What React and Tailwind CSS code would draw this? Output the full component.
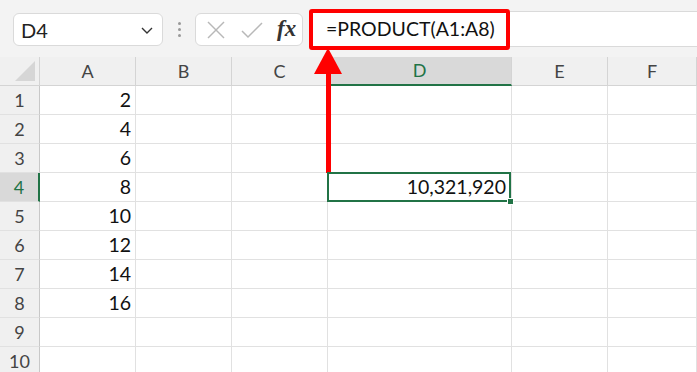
import React from 'react';

const cols = ['A', 'B', 'C', 'D', 'E', 'F'];
const values = { 1: '2', 2: '4', 3: '6', 4: '8', 5: '10', 6: '12', 7: '14', 8: '16' };
const rows = [1, 2, 3, 4, 5, 6, 7, 8, 9, 10];

function Corner() {
  return (
    <div className="relative h-[29px] border-b border-r border-[#d4d4d4] bg-[#f0f0f0]">
      <svg className="absolute right-[4px] bottom-[4px]" width="20" height="20" viewBox="0 0 20 20">
        <polygon points="20,0 20,20 0,20" fill="#d6d6d6" />
      </svg>
    </div>
  );
}

function ColHeader({ label }) {
  const active = label === 'D';
  return (
    <div
      className={
        'flex h-[29px] items-center justify-center border-r text-[18px] ' +
        (active
          ? 'border-b-2 border-r-[#d4d4d4] border-b-[#217346] bg-[#d9d9d9] text-[#217346]'
          : 'border-b border-[#d4d4d4] bg-[#f0f0f0] text-[#444]')
      }
    >
      {label}
    </div>
  );
}

function RowHeader({ n }) {
  const active = n === 4;
  return (
    <div
      className={
        'flex h-[29px] items-center justify-center border-b text-[18px] ' +
        (active
          ? 'border-r-2 border-b-[#e1e1e1] border-r-[#217346] bg-[#d9d9d9] text-[#217346]'
          : 'border-r border-b-[#e1e1e1] border-r-[#c8c8c8] bg-[#f0f0f0] text-[#444]')
      }
    >
      {n}
    </div>
  );
}

export default function App() {
  return (
    <div className="relative h-[372px] w-[697px] overflow-hidden bg-white" style={{ fontFamily: 'Lato, "Open Sans", sans-serif' }}>
      {/* formula bar */}
      <div className="flex h-[57px] items-start bg-[#f3f3f3] pt-[13px]">
        <div className="ml-[13px] flex h-[33px] w-[150px] items-center justify-between rounded-md border border-[#dadada] bg-white pl-[7px] pr-[8px] text-[20px] text-[#222]">
          <span>D4</span>
          <svg width="14" height="14" viewBox="0 0 14 14" fill="none" stroke="#333" strokeWidth="1.4">
            <polyline points="2,5 7,10 12,5" />
          </svg>
        </div>
        <div className="flex h-[33px] w-[32px] flex-col items-center justify-center gap-[3px]">
          <span className="h-[3px] w-[3px] rounded-full bg-[#999]" />
          <span className="h-[3px] w-[3px] rounded-full bg-[#999]" />
          <span className="h-[3px] w-[3px] rounded-full bg-[#999]" />
        </div>
        <div className="flex h-[33px] w-[108px] items-center rounded-md border border-[#dadada] bg-white">
          <svg className="ml-[9px]" width="22" height="22" viewBox="0 0 22 22" fill="none" stroke="#b8b8b8" strokeWidth="1.5">
            <line x1="3" y1="3" x2="19" y2="19" />
            <line x1="19" y1="3" x2="3" y2="19" />
          </svg>
          <svg className="ml-[13px]" width="24" height="22" viewBox="0 0 24 22" fill="none" stroke="#b8b8b8" strokeWidth="1.5">
            <polyline points="2,12 8,18 22,4" />
          </svg>
          <span className="ml-[13px] text-[23px] font-bold italic text-[#333]" style={{ fontFamily: '"Liberation Serif", serif' }}>
            fx
          </span>
        </div>
        <div className="ml-[7px] mt-[-2px] flex h-[36px] flex-1 items-center border-y border-[#dadada] bg-white">
          <div className="-ml-[1px] flex h-[41px] w-[201px] items-center rounded-[3px] border-[4px] border-[#ff0000] pl-[13px] text-[19.5px] text-[#111]">
            =PRODUCT(A1:A8)
          </div>
        </div>
      </div>

      {/* grid */}
      <div className="grid grid-cols-[40px_96px_96px_96px_184px_96px_1fr]">
        <Corner />
        {cols.map((c) => (
          <ColHeader key={c} label={c} />
        ))}
        {rows.map((r) => (
          <React.Fragment key={r}>
            <RowHeader n={r} />
            {cols.map((c) => (
              <div
                key={c}
                className={
                  'relative flex h-[29px] items-center justify-end border-b border-r border-[#e1e1e1] pr-[4px] text-[19.5px] text-[#111] ' +
                  (c === 'D' && r === 4 ? 'z-10' : '')
                }
              >
                {c === 'A' && values[r]}
                {c === 'D' && r === 4 && (
                  <>
                    <div className="absolute -left-[1px] -top-[1px] bottom-[-1px] right-0 border-2 border-[#217346]" />
                    <div className="absolute -bottom-[4px] -right-[3px] h-[7px] w-[7px] border border-white bg-[#217346]" />
                    <span className="relative pr-[1px]">10,321,920</span>
                  </>
                )}
              </div>
            ))}
          </React.Fragment>
        ))}
      </div>

      {/* annotation arrow */}
      <svg className="absolute left-[312px] top-[48px]" width="32" height="126" viewBox="0 0 32 126">
        <polygon points="16,0 30,26 2,26" fill="#ff0000" />
        <rect x="14" y="24" width="5" height="101" fill="#ff0000" />
      </svg>
    </div>
  );
}
